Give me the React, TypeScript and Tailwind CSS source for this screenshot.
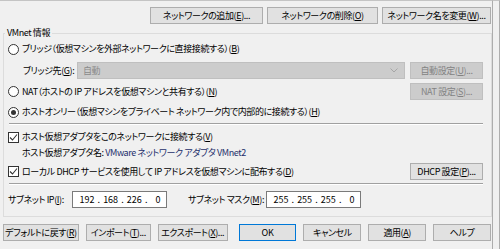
import React from "react";

const font = "font-['Noto_Sans_CJK_JP','Noto_Sans',sans-serif] [font-feature-settings:'palt'] text-[9px] tracking-[-0.4px] whitespace-nowrap";

function U({ children }: { children: React.ReactNode }) {
  return <span className="underline underline-offset-[1px]">{children}</span>;
}

function Btn({
  children,
  className = "",
  disabled = false,
  primary = false,
}: {
  children: React.ReactNode;
  className?: string;
  disabled?: boolean;
  primary?: boolean;
}) {
  const base = "h-[17px] flex items-center justify-center border leading-none";
  const look = disabled
    ? "bg-[#cccccc] border-[#bfbfbf] text-[#838383]"
    : primary
    ? "bg-[#e1e1e1] border-[#0078d7] text-black"
    : "bg-[#e1e1e1] border-[#adadad] text-black";
  return <div className={`${base} ${look} ${className}`}>{children}</div>;
}

function Radio({ checked = false }: { checked?: boolean }) {
  return (
    <div className="w-[11px] h-[11px] rounded-full border border-[#333333] bg-white flex items-center justify-center shrink-0">
      {checked && <div className="w-[5px] h-[5px] rounded-full bg-[#333333]" />}
    </div>
  );
}

function Check() {
  return (
    <div className="w-[11px] h-[11px] border border-[#333333] bg-white flex items-center justify-center shrink-0">
      <svg width="9" height="9" viewBox="0 0 9 9">
        <path d="M1 4.5 L3.5 7 L8 1.5" fill="none" stroke="#333333" strokeWidth="1.1" />
      </svg>
    </div>
  );
}

function Sep() {
  return <div className="ml-[5px] mr-[8px] h-[2px] border-t border-[#a0a0a0] border-b border-b-white" />;
}

function IpBox({ parts }: { parts: string[] }) {
  return (
    <div className="w-[95px] h-[17px] bg-white border border-[#7a7a7a] flex items-center pl-[6px] leading-none tracking-normal">
      {parts.map((p, i) => (
        <React.Fragment key={i}>
          <span className="w-[16px] text-center">{p}</span>
          {i < 3 && <span className="w-[8px] text-center">.</span>}
        </React.Fragment>
      ))}
    </div>
  );
}

export default function App() {
  return (
    <div className={`w-[500px] h-[249px] bg-[#f0f0f0] flex overflow-hidden text-black ${font}`}>
      <div className="w-[493px] h-full border-r border-[#adadad] border-t border-t-[#c4c4c4] flex flex-col">
        {/* top buttons */}
        <div className="h-[32px] flex items-start justify-end gap-[4px] pt-[6px] pr-[1px]">
          <Btn className="w-[113px]">ネットワークの追加(<U>E</U>)...</Btn>
          <Btn className="w-[111px]">ネットワークの削除(<U>O</U>)</Btn>
          <Btn className="w-[109px]">ネットワーク名を変更(<U>W</U>)...</Btn>
        </div>

        {/* group box */}
        <fieldset className="ml-[3px] w-[489px] h-[190px] border border-[#dcdcdc] flex flex-col -mt-[6px]">
          <legend className="ml-[1px] px-[2px] leading-[12px]">VMnet 情報</legend>

          <div className="h-[16px] mt-[2px] flex items-center gap-[3px] pl-[4px]">
            <Radio />
            <span>ブリッジ（仮想マシンを外部ネットワークに直接接続する）(<U>B</U>)</span>
          </div>

          <div className="h-[17px] mt-[5px] flex items-center">
            <span className="w-[73px] pl-[19px]">ブリッジ先(<U>G</U>):</span>
            <div className="w-[328px] h-[17px] bg-[#cccccc] border border-[#bfbfbf] flex items-center justify-between pl-[5px] pr-[6px] text-[#8a8a8a]">
              <span>自動</span>
              <svg width="8" height="5" viewBox="0 0 8 5">
                <path d="M0.5 0.5 L4 4 L7.5 0.5" fill="none" stroke="#a6a6a6" strokeWidth="1" />
              </svg>
            </div>
            <Btn disabled className="w-[73px] ml-[5px]">自動設定(<U>U</U>)...</Btn>
          </div>

          <div className="h-[17px] mt-[4px] flex items-center justify-between pl-[4px] pr-[8px]">
            <div className="flex items-center gap-[3px]">
              <Radio />
              <span>NAT（ホストの IP アドレスを仮想マシンと共有する）(<U>N</U>)</span>
            </div>
            <Btn disabled className="w-[73px]">NAT 設定(<U>S</U>)...</Btn>
          </div>

          <div className="h-[16px] mt-[4px] flex items-center gap-[3px] pl-[4px]">
            <Radio checked />
            <span>ホストオンリー（仮想マシンをプライベート ネットワーク内で内部的に接続する）(<U>H</U>)</span>
          </div>

          <div className="mt-[3px]">
            <Sep />
          </div>

          <div className="h-[16px] mt-[4px] flex items-center gap-[3px] pl-[4px]">
            <Check />
            <span>ホスト仮想アダプタをこのネットワークに接続する(<U>V</U>)</span>
          </div>

          <div className="h-[16px] flex items-center pl-[18px]">
            <span>ホスト仮想アダプタ名:&nbsp;</span>
            <span className="text-[#1d2f6b]">VMware ネットワーク アダプタ VMnet2</span>
          </div>

          <div className="h-[17px] mt-[2px] flex items-center justify-between pl-[4px] pr-[8px]">
            <div className="flex items-center gap-[3px]">
              <Check />
              <span>ローカル DHCP サービスを使用して IP アドレスを仮想マシンに配布する(<U>D</U>)</span>
            </div>
            <Btn className="w-[73px]">DHCP 設定(<U>P</U>)...</Btn>
          </div>

          <div className="mt-[3px]">
            <Sep />
          </div>

          <div className="h-[17px] mt-[6px] flex items-center pl-[4px]">
            <span className="w-[64px]">サブネット IP(<U>I</U>):</span>
            <IpBox parts={["192", "168", "226", "0"]} />
            <span className="ml-[21px] w-[78px]">サブネット マスク(<U>M</U>):</span>
            <IpBox parts={["255", "255", "255", "0"]} />
          </div>
        </fieldset>

        {/* bottom buttons */}
        <div className="h-[17px] mt-[7px] flex items-center pl-[3px] pr-[1px]">
          <Btn className="w-[76px]">デフォルトに戻す(<U>R</U>)</Btn>
          <Btn className="w-[65px] ml-[7px]">インポート(<U>T</U>)...</Btn>
          <Btn className="w-[70px] ml-[7px]">エクスポート(<U>X</U>)...</Btn>
          <Btn primary className="w-[58px] ml-[11px]">OK</Btn>
          <Btn className="w-[58px] ml-[7px]">キャンセル</Btn>
          <Btn className="w-[58px] ml-[7px]">適用(<U>A</U>)</Btn>
          <Btn className="w-[58px] ml-[7px]">ヘルプ</Btn>
        </div>
      </div>
      <div className="flex-1 h-full border-r border-[#adadad] border-t border-t-[#c4c4c4]" />
    </div>
  );
}
